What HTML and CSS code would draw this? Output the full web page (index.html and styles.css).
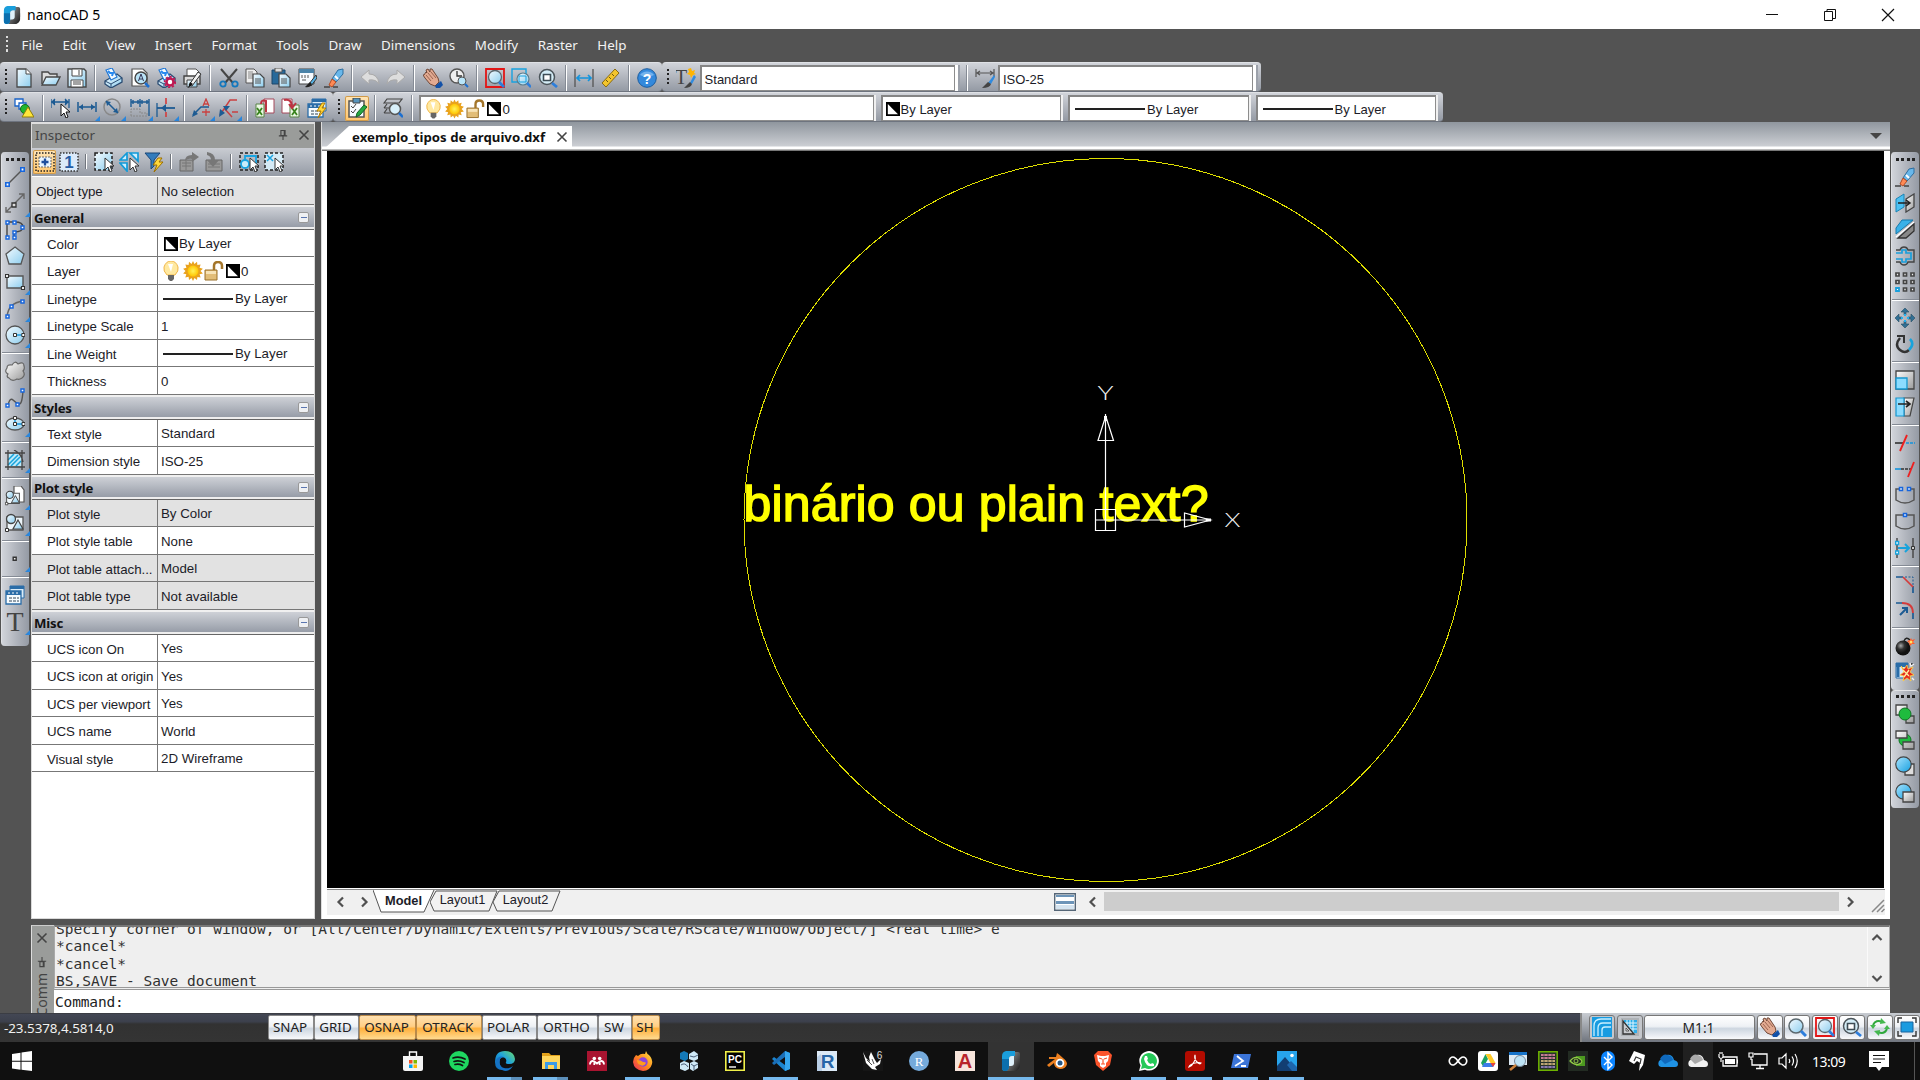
FILE: index.html
```html
<!DOCTYPE html>
<html lang="en">
<head>
<meta charset="utf-8">
<title>nanoCAD 5</title>
<link rel="stylesheet" href="styles.css">
</head>
<body>
<svg class="sprite" aria-hidden="true">
  <defs>
    <linearGradient id="gBlue" x1="0" y1="0" x2="1" y2="1"><stop offset="0" stop-color="#f4fbff"/><stop offset="1" stop-color="#8ccdee"/></linearGradient>
    <linearGradient id="gGrey" x1="0" y1="0" x2="1" y2="1"><stop offset="0" stop-color="#ffffff"/><stop offset="1" stop-color="#9a9a9a"/></linearGradient>
    <linearGradient id="gCyan" x1="0" y1="0" x2="1" y2="1"><stop offset="0" stop-color="#a8e4ff"/><stop offset="1" stop-color="#169fe0"/></linearGradient>
    <linearGradient id="gLogo" x1="0" y1="0" x2="1" y2="1"><stop offset="0" stop-color="#9a9a9a"/><stop offset="1" stop-color="#1a1a1a"/></linearGradient>
    <linearGradient id="gEdge" x1="0" y1="1" x2="1" y2="0"><stop offset="0" stop-color="#0b62b8"/><stop offset=".55" stop-color="#1fa3dd"/><stop offset="1" stop-color="#6bdc6a"/></linearGradient>
    <linearGradient id="gFire" x1="1" y1="0" x2="0" y2="1"><stop offset="0" stop-color="#ffe94a"/><stop offset=".5" stop-color="#ff8a1c"/><stop offset="1" stop-color="#e8265f"/></linearGradient>
    <radialGradient id="gSun"><stop offset="0" stop-color="#fff35a"/><stop offset="1" stop-color="#ffc400"/></radialGradient>
    <radialGradient id="gBomb" cx=".35" cy=".35"><stop offset="0" stop-color="#aaa"/><stop offset=".5" stop-color="#333"/><stop offset="1" stop-color="#111"/></radialGradient>
  </defs>
  <symbol id="logo" viewBox="0 0 20 20"><path d="M8 5h7v3h4v4q0 8-7 8H6v-3l2-1z" fill="url(#gLogo)"/><path d="M13 1h4q2 0 2 2v12q-1 4-5 5H7l1-4h3q2 0 2-3z" fill="url(#gLogo)"/><path d="M5 0h9v5h-3q-3 0-3 3v7q0 5-4 5-3 0-3-3V5q0-4 4-5z" fill="#1a9edb"/><path d="M1 8h7v7q0 5-4 5-3 0-3-3z" fill="#0c6fae"/><path d="M8 8q0-3 3-3h2v7q0 3-3 3H8z" fill="#dff1fa"/></symbol>
  <symbol id="new" viewBox="0 0 20 20"><path d="M3 1h9l5 5v13H3z" fill="url(#gBlue)" stroke="#484848" stroke-width="1.3"/><path d="M12 1v5h5" fill="#fff" stroke="#484848"/></symbol>
  <symbol id="open" viewBox="0 0 20 20"><path d="M1 16V4h6l2 2h7v3" fill="#ddd" stroke="#484848" stroke-width="1.4"/><path d="M1 17 5 9h14l-4 8z" fill="url(#gBlue)" stroke="#484848" stroke-width="1.3"/></symbol>
  <symbol id="save" viewBox="0 0 20 20"><path d="M1 1h16l2 2v16H1z" fill="url(#gBlue)" stroke="#484848" stroke-width="1.4"/><path d="M5 1h10v7H5zM4 12h12v7H4z" fill="#fff" stroke="#484848"/><path d="M12 2v5M6 14h8M6 16h8" stroke="#484848"/></symbol>
  <symbol id="print" viewBox="0 0 20 20"><path d="M2 13 14 6l5 4v4L8 20l-6-4z" fill="url(#gBlue)" stroke="#294b72" stroke-width="1.3"/><path d="m2 13 6 3 11-6M8 16v4" fill="none" stroke="#294b72"/><path d="M3 2 9 0l5 9-6 3z" fill="#f4fbff" stroke="#2378d4" stroke-width="1.2"/><path d="m5 3 2 2 3 0-1 3" fill="none" stroke="#2789f0" stroke-width="2"/></symbol>
  <symbol id="preview" viewBox="0 0 20 20"><path d="M2 1h11l4 4v13H2z" fill="#fff" stroke="#555" stroke-width="1.2"/><circle cx="11" cy="10" r="6" fill="#b9e3f7" stroke="#444" stroke-width="1.4"/><path d="m8.500 13 2.500-7 2.500 7M9.500 11h3.200" fill="none" stroke="#335"/><path d="m15 15 4 4" stroke="#1c6fd0" stroke-width="2.500"/></symbol>
  <symbol id="pgear" viewBox="0 0 20 20"><use href="#print"/><circle cx="14" cy="14" r="3.500" fill="#fff" stroke="#c01852" stroke-width="2.500"/><circle cx="14" cy="14" r="5.300" fill="none" stroke="#c01852" stroke-width="1.800" stroke-dasharray="2 2"/></symbol>
  <symbol id="printer" viewBox="0 0 20 20"><path d="M5 8V1h9l3 3v4" fill="#fff" stroke="#555"/><path d="M2 8h16v8H2z" fill="#ddd" stroke="#444" stroke-width="1.400"/><path d="M5 12h10v7H5z" fill="url(#gBlue)" stroke="#444"/><path d="m7 17 9-13 3 2-9 12z" fill="#f5f5f5" stroke="#333"/><path d="m6 20 5-4-3-2z" fill="#111"/></symbol>
  <symbol id="cut" viewBox="0 0 20 20"><path d="M2 1 14 15M18 1 6 15" stroke="#454545" stroke-width="2"/><circle cx="4" cy="16" r="2.700" fill="none" stroke="#1478bd" stroke-width="1.800"/><circle cx="16" cy="16" r="2.700" fill="none" stroke="#1478bd" stroke-width="1.800"/></symbol>
  <symbol id="copy" viewBox="0 0 20 20"><path d="M1 1h8l3 3v11H1z" fill="#eee" stroke="#555"/><path d="M3 4h5M3 6h5M3 8h5M3 10h5" stroke="#888"/><path d="M8 6h7l4 4v9H8z" fill="url(#gBlue)" stroke="#444" stroke-width="1.200"/><path d="M10 11h6M10 13h6M10 15h6" stroke="#555"/></symbol>
  <symbol id="paste" viewBox="0 0 20 20"><path d="M1 2h13v14H1z" fill="#27699a" stroke="#1d4668"/><path d="M4 0h7v4H4z" fill="#ddd" stroke="#555"/><path d="M8 6h7l4 4v9H8z" fill="url(#gBlue)" stroke="#444" stroke-width="1.200"/><path d="M10 11h6M10 13h6M10 15h6" stroke="#555"/></symbol>
  <symbol id="pspec" viewBox="0 0 20 20"><path d="M2 1h15v15H2z" fill="#f8fbff" stroke="#444"/><path d="M2 1h15v4H2z" fill="#4a83a9"/><path d="M5 7v3M8 7v3M11 7v3M5 12h4" stroke="#555"/><path d="m19 7-7 9 2 2 6-8z" fill="#57b4e8" stroke="#333"/><path d="m13 14-5 5q5 1 7-3z" fill="#222"/></symbol>
  <symbol id="brush" viewBox="0 0 20 20"><path d="m19 1-5 1-6 9 4 3 7-8z" fill="#69b7ea" stroke="#2d6d9f"/><path d="m11 8 3 3" stroke="#fff" stroke-width="2"/><path d="m8 11-3 6 3 2 4-5z" fill="#ff8a55" stroke="#b04a23"/><path d="M0 19h6M9 19h5" stroke="#444" stroke-width="1.600"/></symbol>
  <symbol id="undo" viewBox="0 0 20 20"><path d="m1 9 8-7v4q9 0 10 10-3-5-10-4v4z" fill="#ddd" stroke="#aaa"/></symbol>
  <symbol id="redo" viewBox="0 0 20 20"><path d="m19 9-8-7v4Q2 6 1 16q3-5 10-4v4z" fill="#ddd" stroke="#aaa"/></symbol>
  <symbol id="hand" viewBox="0 0 20 20"><path d="M1 7 3 4l1 1-1-3 2-1 2 3 0-3 2 0 6 9 1 4-4 4-5-2-5-6-2-3z" fill="#e2aa91" stroke="#704838"/><path d="m5 5 5 6M3 7l5 6M8 4l5 6" stroke="#9b6552"/><path d="m12 18 6-5 2 4-3 3h-4z" fill="#1251a8"/></symbol>
  <symbol id="zclock" viewBox="0 0 20 20"><circle cx="8" cy="8" r="7" fill="#eee" stroke="#555" stroke-width="1.400"/><path d="M8 3v5h5" fill="none" stroke="#333" stroke-width="1.300"/><circle cx="13" cy="13" r="4" fill="#b8e5fa" stroke="#555"/><path d="m16 16 3 3" stroke="#1c6fd0" stroke-width="2"/></symbol>
  <symbol id="zoom" viewBox="0 0 20 20"><circle cx="9" cy="9" r="7" fill="url(#gBlue)" stroke="#5b686e" stroke-width="1.500"/><path d="m14 14 5 5" stroke="#2d7edb" stroke-width="3"/></symbol>
  <symbol id="zred" viewBox="0 0 20 20"><path d="M1 1h18v18H1z" fill="none" stroke="#e31616" stroke-width="1.800"/><circle cx="10" cy="9" r="6.500" fill="url(#gBlue)" stroke="#59656c" stroke-width="1.300"/><path d="m14 14 5 5" stroke="#2d7edb" stroke-width="2.600"/></symbol>
  <symbol id="zwin" viewBox="0 0 20 20"><path d="M1 1h14v13H1z" fill="none" stroke="#18a2e0" stroke-width="1.400"/><circle cx="12" cy="11" r="6" fill="url(#gBlue)" stroke="#5b7c8c" stroke-width="1.200"/><path d="M8 8h7v6H8z" fill="none" stroke="#18a2e0"/><path d="m16 15 4 4" stroke="#2d7edb" stroke-width="2.500"/></symbol>
  <symbol id="zpage" viewBox="0 0 20 20"><circle cx="9" cy="9" r="7.500" fill="#d4edf7" stroke="#4b545a" stroke-width="1.500"/><path d="M5.500 6.500h7v6h-7z" fill="#fff" stroke="#3d4c55" stroke-width="1.600"/><path d="m14 15 5 4" stroke="#2d7edb" stroke-width="2.800"/></symbol>
  <symbol id="measure" viewBox="0 0 20 20"><path d="M1 1v18M19 1v18" stroke="#555" stroke-width="1.300"/><path d="M3 10h14M6 7l-3 3 3 3M14 7l3 3-3 3" fill="none" stroke="#1494dc" stroke-width="1.700"/></symbol>
  <symbol id="ruler" viewBox="0 0 20 20"><path d="m2 15 13-14 4 4L6 19z" fill="#f3c52d" stroke="#8a6b12"/><path d="m6 12 2 2M9 9l2 2M12 6l2 2" stroke="#6d5510"/></symbol>
  <symbol id="dstyle" viewBox="0 0 20 20"><path d="M1 1v8M19 1v8M2 5h16M5 3 2 5l3 2M15 3l3 2-3 2" fill="none" stroke="#555" stroke-width="1.200"/><path d="m19 7-6 8 3 1 4-7z" fill="#2f8be0"/><path d="m13 14-6 6q8 0 9-4z" fill="#444"/></symbol>
  <symbol id="layers" viewBox="0 0 20 20"><path d="M1 1h8v7H1z" fill="#fff" stroke="#1762c8" stroke-width="1.300"/><path d="M5 5h7v6H5z" fill="#fff" stroke="#1762c8" stroke-width="1.300"/><circle cx="11" cy="11" r="4.500" fill="#20b52e" stroke="#116f1c"/><path d="m14 9 6 10H8z" fill="#ffe63a" stroke="#8f7d0e"/></symbol>
  <symbol id="dimsel" viewBox="0 0 20 20"><path d="M0 1v9M18 1v9M1 4h16M4 1 1 4l3 3M14 1l3 3-3 3" fill="#1d5b93" stroke="#1d5b93" stroke-width="1.300"/><path d="m10 6v12l3-3 2 5 2-1-2-5h4z" fill="#fff" stroke="#111"/></symbol>
  <symbol id="dimlin" viewBox="0 0 20 20"><path d="M1 4v10M19 4v10M2 9h16" stroke="#1d5b93" stroke-width="1.500"/><path d="m2 9 4-3v6zM18 9l-4-3v6z" fill="#1d5b93"/></symbol>
  <symbol id="dimdia" viewBox="0 0 20 20"><circle cx="9" cy="9" r="8" fill="none" stroke="#888" stroke-width="1.500"/><path d="m3 3 12 12" stroke="#1d5b93" stroke-width="1.500"/><path d="m3 3 5 1-4 4zM15 15l-5-1 4-4z" fill="#1d5b93"/></symbol>
  <symbol id="dimbase" viewBox="0 0 20 20"><path d="M1 1v8M10 1v8M19 1v17M1 4h18M3 2v4M8 2v4M12 2v4M17 2v4" stroke="#1d5b93" stroke-width="1.400"/><path d="M1 18v-7h9v4h7v3z" fill="none" stroke="#888" stroke-dasharray="2 1"/></symbol>
  <symbol id="dimcen" viewBox="0 0 20 20"><path d="M1 5v14" stroke="#1d5b93" stroke-width="1.300"/><path d="M10 0v6M10 14v5" stroke="#d43b3b" stroke-width="1.600"/><path d="M1 10h18" stroke="#1d5b93" stroke-width="1.800"/><path d="m5 10 5-4v8z" fill="#1d5b93"/></symbol>
  <symbol id="leadA" viewBox="0 0 20 20"><path d="m1 17 8-8h8" fill="none" stroke="#1d5b93" stroke-width="1.500"/><path d="m0 19 2-7 4 4z" fill="#1d5b93"/><path d="m11 8 3-7 3 7M12 6h4M14 11v7M10 14h8" stroke="#c94040" stroke-width="1.300" fill="none"/></symbol>
  <symbol id="leadB" viewBox="0 0 20 20"><path d="m1 17 10-15h7M5 10l8 9" fill="none" stroke="#c94040" stroke-width="1.500"/><path d="m0 19 1-8 5 4zM4 8h7l-4 5z" fill="#1d5b93"/><path d="M13 14h6" stroke="#c94040" stroke-width="1.500"/></symbol>
  <symbol id="xls1" viewBox="0 0 20 20"><path d="M9 1h10v14H9z" fill="#fff" stroke="#a5485a"/><path d="M1 6h8v13H1z" fill="#eaf7e3" stroke="#588346"/><path d="m2 10 5 7M7 10l-5 7" stroke="#38831d" stroke-width="1.800"/><path d="M6 6q0-5 5-3v11" fill="none" stroke="#bd3342" stroke-width="2"/></symbol>
  <symbol id="xls2" viewBox="0 0 20 20"><path d="M1 1h10v14H1z" fill="#fff" stroke="#a5485a"/><path d="M9 7h9v12H9z" fill="#eaf7e3" stroke="#588346"/><path d="m11 10 5 7M16 10l-5 7" stroke="#38831d" stroke-width="1.800"/><path d="M3 2q8-2 8 8M8 6l3 4 4-5" fill="none" stroke="#bd3342" stroke-width="2"/></symbol>
  <symbol id="tblz" viewBox="0 0 20 20"><use href="#table"/><path d="m15 5-5 8h4l-3 7 8-10h-4l3-5z" fill="#ffd83b" stroke="#b57d00"/></symbol>
  <symbol id="clip" viewBox="0 0 20 20"><path d="M2 3h15v16H2z" fill="#f6fbff" stroke="#555" stroke-width="1.500"/><path d="M6 0h7v5H6z" fill="#5594bd" stroke="#444"/><path d="m4 8 2 2 3-4M4 13l2 2 3-4" fill="none" stroke="#444"/><path d="m17 7-7 8-1 4 4-2 7-8z" fill="#25a942" stroke="#116322"/></symbol>
  <symbol id="lyrz" viewBox="0 0 20 20"><path d="M1 5 4 1h15l-3 4zM1 10l3-4M1 15l3-4M1 10h5M1 15h6" fill="none" stroke="#444" stroke-width="1.200"/><circle cx="12" cy="11" r="5.500" fill="#d8f0fb" stroke="#555" stroke-width="1.500"/><path d="m16 15 4 4" stroke="#1c6fd0" stroke-width="2.500"/></symbol>
  <symbol id="bulb" viewBox="0 0 20 20"><path d="M6 14Q2 10 3 6q2-6 7-6t7 6q1 4-3 8z" fill="#ffe9a1" stroke="#f0b64a"/><path d="M7 3h5l-2 8z" fill="#fff"/><path d="M7 14h6v4l-2 2H9l-2-2z" fill="#666"/></symbol>
  <symbol id="sun" viewBox="0 0 20 20"><path d="m10 0 1.500 3L14 .8l.4 3.300 3.200-.6-1 3.200 3.300 1L17.500 10l2.400 2.500-3.300.8 1 3.300-3.200-.7L14 19l-2.500-2L10 20l-1.500-3L6 19l-.4-3.200-3.300.7 1-3.200-3.200-.8L2.500 10 .1 7.700l3.300-1-1-3.200 3.200.6L6 .8 8.500 3z" fill="#e9a21d"/><circle cx="10" cy="10" r="5.500" fill="url(#gSun)"/></symbol>
  <symbol id="lock" viewBox="0 0 20 20"><path d="M10 9V5q0-4 4-4t4 4v3" fill="none" stroke="#a4762b" stroke-width="2.500"/><path d="M1 9h12v10H1z" fill="#e2bd77" stroke="#9a712b"/><path d="M2 10h10v3H2z" fill="#f7e3b7"/></symbol>
  <symbol id="sw" viewBox="0 0 14 14"><path d="M.7.7h12.600v12.600H.7z" fill="#000" stroke="#000" stroke-width="1.400"/><path d="M1.800 2v10.200H12z" fill="#fff"/></symbol>
  <symbol id="cursor" viewBox="0 0 20 20"><path d="m11 6v12l3-3 2 5 2-1-2-5h4z" fill="#fff" stroke="#333"/></symbol>
  <symbol id="iadd" viewBox="0 0 20 20"><path d="M1 1h18v18H1z" fill="none" stroke="#222" stroke-width="1.500" stroke-dasharray="1.500 1.500"/><path d="M4 5h12v10H4z" fill="#e9f5ff" stroke="#666" stroke-dasharray="2 1"/><path d="M10 6.500v7M6.500 10h7" stroke="#204f9d" stroke-width="2.300"/></symbol>
  <symbol id="isel" viewBox="0 0 20 20"><path d="M1 1h17v17H1z" fill="url(#gBlue)" stroke="#222" stroke-width="1.500" stroke-dasharray="3 2"/><use href="#cursor"/></symbol>
  <symbol id="itri" viewBox="0 0 20 20"><path d="M1 8 8 1v7zM11 1h8v8zM1 11h7v8z" fill="#cceeff" stroke="#129bd9" stroke-width="1.700"/><use href="#cursor"/></symbol>
  <symbol id="ifilt" viewBox="0 0 20 20"><path d="M1 1h15l-6 7v6l-3 3V8z" fill="#337cbc" stroke="#1a4777"/><path d="m14 6-5 7h4l-3 7 9-10h-4l3-4z" fill="#ffd83b" stroke="#9c6f00"/></symbol>
  <symbol id="iout" viewBox="0 0 20 20"><path d="M1 8h13v11H1z" fill="#999" stroke="#666"/><path d="M3 11h9M3 14h9M7 9v9" stroke="#777"/><path d="M6 9q0-6 7-6V0l7 5-7 5V7q-4-1-7 2z" fill="#777"/></symbol>
  <symbol id="iin" viewBox="0 0 20 20"><path d="M2 8h16v11H2z" fill="#999" stroke="#666"/><path d="M4 12h12M4 15h12" stroke="#777"/><path d="M3 0q8 1 8 8h4l-6 7-6-7h4q0-4-4-5z" fill="#777"/></symbol>
  <symbol id="irect" viewBox="0 0 20 20"><path d="M1 1h18v17H1z" fill="none" stroke="#222" stroke-width="1.500" stroke-dasharray="3 2"/><path d="M6 4h11v9H6z" fill="none" stroke="#19a4e2" stroke-width="1.800"/><circle cx="6" cy="12" r="4" fill="#c8ecfb" stroke="#19a4e2" stroke-width="1.800"/><use href="#cursor"/></symbol>
  <symbol id="ix" viewBox="0 0 20 20"><path d="M1 1h18v17H1z" fill="#d5eaf5" stroke="#222" stroke-width="1.500" stroke-dasharray="3 2"/><path d="m3 3 6 6M9 3 3 9" stroke="#19a4e2" stroke-width="1.500"/><use href="#cursor"/></symbol>
  <symbol id="line" viewBox="0 0 20 20"><path d="M2 18 18 2" stroke="#555" stroke-width="1.400"/><path d="M.8 15.800h3.400v3.400H.8zM15.800.8h3.400v3.400h-3.400z" fill="#fff" stroke="#1766dd" stroke-width="1.600"/></symbol>
  <symbol id="xline" viewBox="0 0 20 20"><path d="M1 19 19 1M1 14v5h5M14 1h5v5" fill="none" stroke="#666" stroke-width="1.400"/><path d="M7 10h4v4H7z" fill="#ddd" stroke="#333" stroke-width="1.300"/></symbol>
  <symbol id="pline" viewBox="0 0 20 20"><path d="M2 18V2h8q8 0 8 5t-9 5v6" fill="none" stroke="#444" stroke-width="1.400"/><path d="M1 1h3v3H1zM8 1h3v3H8zM16 6h3v3h-3zM8 11h3v3H8zM1 16h3v3H1zM8 16h3v3H8z" fill="#fff" stroke="#1766dd" stroke-width="1.400"/></symbol>
  <symbol id="penta" viewBox="0 0 20 20"><path d="m10 1 9 7-3 10H4L1 8z" fill="url(#gBlue)" stroke="#555" stroke-width="1.300"/></symbol>
  <symbol id="rect" viewBox="0 0 20 20"><path d="M2 4h16v12H2z" fill="url(#gBlue)" stroke="#555" stroke-width="1.400"/><path d="M.5 2.500h3v3h-3zM16.500 14.500h3v3h-3z" fill="#fff" stroke="#333" stroke-width="1.200"/></symbol>
  <symbol id="arc" viewBox="0 0 20 20"><path d="M2 18Q3 4 18 2" fill="none" stroke="#666" stroke-width="1.500"/><path d="M1 16h3v3H1zM16 1h3v3h-3zM5 6h3v3H5z" fill="#fff" stroke="#1766dd" stroke-width="1.500"/></symbol>
  <symbol id="circ" viewBox="0 0 20 20"><circle cx="10" cy="10" r="9" fill="url(#gBlue)" stroke="#555" stroke-width="1.300"/><path d="M10 10h8" stroke="#1494dc" stroke-width="1.400"/><path d="M8.500 8.500h3v3h-3zM16.800 8.500h3v3h-3z" fill="#fff" stroke="#333"/></symbol>
  <symbol id="cloud" viewBox="0 0 20 20"><path d="M3 13q-4-2-1-6 0-4 5-3 3-5 6-1 6-3 6 2 1 3-1 5 3 4-1 7-3 2-5 1-5 3-8-1-3-1-1-4z" fill="url(#gGrey)" stroke="#666" stroke-width="1.200"/></symbol>
  <symbol id="spline" viewBox="0 0 20 20"><path d="M3 17q2-8 5-5t6 4 4-13" fill="none" stroke="#555" stroke-width="1.400"/><path d="M1 16h3v3H1zM11 15h3v3h-3zM16 1h3v3h-3z" fill="#fff" stroke="#1766dd" stroke-width="1.400"/></symbol>
  <symbol id="ell" viewBox="0 0 20 20"><ellipse cx="10" cy="10" rx="9" ry="6" fill="url(#gBlue)" stroke="#555" stroke-width="1.300"/><path d="M10 4v6h8" fill="none" stroke="#1494dc" stroke-width="1.400"/><path d="M8.500 2.500h3v3h-3zM8.500 8.500h3v3h-3zM17 8.500h3v3h-3z" fill="#fff" stroke="#333"/></symbol>
  <symbol id="hatch" viewBox="0 0 20 20"><path d="M3 4h10q4 3 4 12H3z" fill="#bdeafa"/><path d="m3 10 6-6M3 15 13 5M6 16l9-9M11 16l5-5" stroke="#18a3dc" stroke-width="1.500"/><path d="M3 0v20M0 3h20M17 0v20M0 17h20M9 0q8 4 9 12" fill="none" stroke="#444" stroke-width="1.300"/></symbol>
  <symbol id="blk1" viewBox="0 0 20 20"><path d="M9 0h7l3 4v12H9z" fill="#fff" stroke="#555" stroke-width="1.200"/><use href="#blk2" width="20" height="20" transform="translate(0 4) scale(.8)"/></symbol>
  <symbol id="blk2" viewBox="0 0 20 20"><path d="M2 17V4h16v13z" fill="#eef6fa" stroke="#555" stroke-width="1.300"/><circle cx="6" cy="6" r="4.500" fill="url(#gBlue)" stroke="#444" stroke-width="1.300"/><path d="m13 7 5 9H8z" fill="url(#gBlue)" stroke="#444" stroke-width="1.200"/><path d="M.5 15.500h3v3h-3z" fill="#fff" stroke="#333"/></symbol>
  <symbol id="point" viewBox="0 0 20 20"><path d="M8.200 8.200h3v3h-3z" fill="#eee" stroke="#333" stroke-width="1.400"/></symbol>
  <symbol id="table" viewBox="0 0 20 20"><path d="M5 1h14v12H5z" fill="#d9ebf8" stroke="#2b6da8"/><path d="M5 1h14v3H5z" fill="#2b6da8"/><path d="M1 6h15v13H1z" fill="#f5fbff" stroke="#2b6da8" stroke-width="1.300"/><path d="M1 6h15v4H1z" fill="#2b6da8"/><path d="M3 8h2M7 8h2M11 8h2" stroke="#fff"/><path d="M4 13h3M8 13h3M12 13h2M4 16h3M8 16h3M12 16h2" stroke="#345"/></symbol>
  <symbol id="mirror" viewBox="0 0 20 20"><path d="m1 6 8-5v13l-8 5z" fill="#4cc0f2" stroke="#1a84b5"/><path d="m11 6 8-5v13l-8 5z" fill="url(#gGrey)" stroke="#444" stroke-width="1.300"/><path d="M3 10h11M11 7l4 3-4 3" fill="none" stroke="#222" stroke-width="1.500"/></symbol>
  <symbol id="diag" viewBox="0 0 20 20"><path d="M7 1h11L1 15V9z" fill="#39b1e9" stroke="#1679aa"/><path d="M1 18 19 3" stroke="#fff" stroke-width="1.500"/><path d="M19 5v7l-8 7H3z" fill="#888" stroke="#333" stroke-width="1.300"/></symbol>
  <symbol id="offset" viewBox="0 0 20 20"><path d="M1 4h4q1-3 4-3t4 3h6v12h-6q-1 3-4 3t-4-3H1" fill="none" stroke="#444" stroke-width="1.400"/><path d="M1 7h6V4h4v3h5v6h-5v3H7v-3H1" fill="none" stroke="#189fdc" stroke-width="1.700"/></symbol>
  <symbol id="array" viewBox="0 0 20 20"><path d="M1 1h3v3H1zM8.500 1h3v3h-3zM16 1h3v3h-3zM1 8.500h3v3H1zM8.500 8.500h3v3h-3zM16 8.500h3v3h-3zM8.500 16h3v3h-3zM16 16h3v3h-3z" fill="#eee" stroke="#444" stroke-width="1.700"/><path d="M1 16h3v3H1z" fill="#fff" stroke="#189fdc" stroke-width="1.800"/></symbol>
  <symbol id="move" viewBox="0 0 20 20"><path d="m10 0 4 4h-3v3H9V4H6zM10 20l4-4h-3v-3H9v3H6zM0 10l4-4v3h3v2H4v3zM20 10l-4-4v3h-3v2h3v3z" fill="#316f94" stroke="#294d62" stroke-width=".6"/><path d="M9 6h2v2H9zM9 12h2v2H9zM6 9h2v2H6zM12 9h2v2h-2z" fill="#26b2f0"/></symbol>
  <symbol id="rotate" viewBox="0 0 20 20"><path d="M5 4q-6 7 0 12 5 4 9 0" fill="none" stroke="#333" stroke-width="2.500"/><path d="M14 16q6-6 1-11" fill="none" stroke="#18a3dc" stroke-width="2.500"/><path d="M2 2h7v7" fill="none" stroke="#333" stroke-width="2"/></symbol>
  <symbol id="scale" viewBox="0 0 20 20"><path d="M1 1h18v18H1z" fill="url(#gGrey)" stroke="#444" stroke-width="1.300"/><path d="M1 8h11v11H1z" fill="#8cdcff" stroke="#1697cf" stroke-width="1.300"/></symbol>
  <symbol id="stretch" viewBox="0 0 20 20"><path d="M9 1h10l-4 18H9z" fill="url(#gGrey)" stroke="#444" stroke-width="1.200"/><path d="M1 1h8v18H1z" fill="#8cdcff" stroke="#1697cf" stroke-width="1.200"/><path d="M3 7h11M11 4l4 3-4 3" fill="none" stroke="#222" stroke-width="1.600"/></symbol>
  <symbol id="trim" viewBox="0 0 20 20"><path d="M0 10h8" stroke="#333" stroke-width="1.600"/><path d="M11 10h9" stroke="#1494dc" stroke-width="1.600" stroke-dasharray="3 1"/><path d="M5 18 12 2" stroke="#ed2020" stroke-width="1.900"/></symbol>
  <symbol id="extend" viewBox="0 0 20 20"><path d="M0 10h6" stroke="#1494dc" stroke-width="1.600"/><path d="M6 10h10" stroke="#333" stroke-width="1.600" stroke-dasharray="3 1"/><path d="m13 18 6-15" stroke="#ed2020" stroke-width="1.900"/></symbol>
  <symbol id="brk2" viewBox="0 0 20 20"><path d="M5 4H1v11q9 6 18 0V4h-4" fill="none" stroke="#555" stroke-width="1.500"/><path d="M4.500 2.500h3v3h-3zM12.500 2.500h3v3h-3z" fill="#fff" stroke="#1766dd" stroke-width="1.500"/></symbol>
  <symbol id="brk1" viewBox="0 0 20 20"><path d="M8 4H1v11q9 6 18 0V4h-7" fill="none" stroke="#555" stroke-width="1.500"/><path d="M8.500 2.500h3v3h-3z" fill="#fff" stroke="#1766dd" stroke-width="1.500"/></symbol>
  <symbol id="align" viewBox="0 0 20 20"><path d="M2 0v20M18 0v20" stroke="#444" stroke-width="1.400"/><path d="M3 10h10M10 6l4 4-4 4" fill="none" stroke="#18a3dc" stroke-width="2"/><path d="M.6 3.500h3v3h-3zM.6 13h3v3h-3z" fill="#fff" stroke="#18a3dc" stroke-width="1.400"/><path d="M16.500 8.500h3v3h-3z" fill="#ccc" stroke="#333"/></symbol>
  <symbol id="chamf" viewBox="0 0 20 20"><path d="M1 3h7M18 12v7" stroke="#1d5b93" stroke-width="1.700"/><path d="m8 3 10 10" stroke="#d43b3b" stroke-width="1.700"/><path d="M10 3h8v8" fill="none" stroke="#1d5b93" stroke-dasharray="2 1.500"/></symbol>
  <symbol id="fillet" viewBox="0 0 20 20"><path d="M1 3h6M18 13v6" stroke="#1d5b93" stroke-width="1.700"/><path d="M7 3q11 0 11 10" fill="none" stroke="#d43b3b" stroke-width="1.800"/><path d="m5 15 6-6M7 8h5v5" fill="none" stroke="#1d5b93" stroke-width="2"/></symbol>
  <symbol id="bomb" viewBox="0 0 20 20"><circle cx="8" cy="12" r="7.500" fill="url(#gBomb)"/><path d="M9 5q2-5 6-1" fill="none" stroke="#222" stroke-width="1.500"/><path d="m16 2 1 2 3-1-2 3 2 2h-3l-2 2-1-3-2-2 3-1z" fill="#ff5a2a"/><circle cx="16" cy="6" r="1.500" fill="#ffe66a"/></symbol>
  <symbol id="boomtbl" viewBox="0 0 20 20"><path d="M1 1h12v15H1z" fill="#d7e9f7" stroke="#2b6da8"/><path d="M1 1h12v4H1z" fill="#2b6da8"/><path d="M3 1v14" stroke="#2b6da8" stroke-width="3"/><path d="m6 4 3 3 3-4 1 4 5-2-3 5 4 3-4 1 1 5-4-3-4 3 1-5-4-1 4-3z" fill="#e42b20" stroke="#ffd74a" stroke-width=".8"/><path d="m8 8 6 6M14 8l-5 7" stroke="#fff0a0" stroke-width="1.300"/><path d="M15 1l1 3 3-2M17 16l2 2" stroke="#f4f4f4" stroke-width="1.400"/></symbol>
  <symbol id="ord1" viewBox="0 0 20 20"><path d="M1 1h11v10H1zM11 12h8v7h-8z" fill="url(#gGrey)" stroke="#444" stroke-width="1.300"/><circle cx="10" cy="10" r="6" fill="#1fbb3e" stroke="#107524"/></symbol>
  <symbol id="ord2" viewBox="0 0 20 20"><circle cx="10" cy="10" r="6" fill="#1fbb3e" stroke="#107524"/><path d="M1 1h11v7H1zM8 12h11v7H8z" fill="url(#gGrey)" stroke="#444" stroke-width="1.300"/></symbol>
  <symbol id="ord3" viewBox="0 0 20 20"><path d="M10 8h9v11h-9z" fill="#ddd" stroke="#444" stroke-width="1.300"/><circle cx="8.500" cy="8.500" r="7.700" fill="url(#gCyan)" stroke="#444" stroke-width="1.200"/></symbol>
  <symbol id="ord4" viewBox="0 0 20 20"><circle cx="8.500" cy="8.500" r="7.700" fill="url(#gCyan)" stroke="#444" stroke-width="1.200"/><path d="M8 9h11v10H8z" fill="url(#gGrey)" stroke="#444" stroke-width="1.300"/></symbol>
  <symbol id="pin" viewBox="0 0 12 14"><path d="M3.500 1.500h5v6h-5zM1 8h10M6 8v5M7.500 1v6" fill="none" stroke="#444" stroke-width="1.300"/></symbol>
  <symbol id="x" viewBox="0 0 12 12"><path d="m1.500 1.500 9 9M10.500 1.500l-9 9" stroke="#444" stroke-width="1.600"/></symbol>
  <symbol id="chev" viewBox="0 0 12 12"><path d="M8 1.500 3.500 6 8 10.500" fill="none" stroke="#505050" stroke-width="2.200"/></symbol>
  <symbol id="pipes" viewBox="0 0 20 20"><path d="M0 0h20v20H0z" fill="#189be0"/><path d="M2 19V9q0-7 7-7h10M6 19v-8q0-5 5-5h8M10 19v-6q0-3 3-3h6" fill="none" stroke="#c8f0ff" stroke-width="1.300"/></symbol>
  <symbol id="gridtri" viewBox="0 0 20 20"><path d="M1 1h18v18H1z" fill="#aeb2b6"/><path d="M4 3h13v13H4z" fill="#2cace8"/><path d="M7 3v13M10 3v13M13 3v13M4 6h13M4 9h13M4 12h13" stroke="#dff5ff"/><path d="M3 4v13h11z" fill="#c9ccd0" stroke="#333" stroke-width="1.300"/><path d="M6 11v3h3z" fill="#eee" stroke="#333" stroke-width=".7"/></symbol>
  <symbol id="regen" viewBox="0 0 20 20"><path d="M3 8q3-6 9-3M17 12q-3 6-9 3" fill="none" stroke="#2fa83c" stroke-width="2"/><path d="m11 1 5 5-6 1zM9 19l-5-5 6-1zM0 8h6l-3 4zM20 12h-6l3-4z" fill="#45b84f"/></symbol>
  <symbol id="full" viewBox="0 0 20 20"><path d="M4 5h12v10H4z" fill="#1a9be0" stroke="#1665a0"/><path d="M1 6V1h4M15 1h4v5M19 14v5h-4M5 19H1v-5" fill="none" stroke="#333" stroke-width="1.400"/></symbol>
  <symbol id="win" viewBox="0 0 20 20"><path d="m0 3 8.500-1.300v8H0zM9.500 1.500 20 0v9.700H9.500zM0 10.700h8.500v8.100L0 17.500zM9.500 10.700H20V20L9.500 18.700z" fill="#fff"/></symbol>
  <symbol id="store" viewBox="0 0 20 20"><path d="M6.500 6V1h7v5" fill="none" stroke="#fff" stroke-width="1.400"/><path d="M0 5h20v13q0 2-2 2H2q-2 0-2-2z" fill="#f4f4f4"/><path d="M6 9h3.500v3.500H6z" fill="#f25022"/><path d="M10.500 9H14v3.500h-3.500z" fill="#7fba00"/><path d="M6 13.500h3.500V17H6z" fill="#00a4ef"/><path d="M10.500 13.500H14V17h-3.500z" fill="#ffb900"/></symbol>
  <symbol id="spot" viewBox="0 0 20 20"><circle cx="10" cy="10" r="10" fill="#1ed760"/><path d="M4 7q6-2 12 1M5 10.500q5-1.500 10 1M6 13.500q4-1 7.500 1" fill="none" stroke="#111" stroke-width="1.700" stroke-linecap="round"/></symbol>
  <symbol id="edge" viewBox="0 0 20 20"><path d="M0 11Q0 0 10 0q9 0 10 8 0 5-6 5-4 0-3-2 1-2-1-4-3-2-5 1-2 7 4 11Q0 20 0 11z" fill="url(#gEdge)"/><path d="M5 8q-2 7 4 9 5 1 9-2-4 7-11 4Q0 16 1 9q3-5 8-3-3 0-4 2z" fill="#1672c5"/></symbol>
  <symbol id="folder" viewBox="0 0 20 20"><path d="M1 2h7l2 2h9v14H1z" fill="#e3a21a"/><path d="M1 5h18v13H1z" fill="#ffd65c"/><path d="M4 18v-7h12v7h-3v-4H7v4z" fill="#3b9be8"/></symbol>
  <symbol id="mend" viewBox="0 0 20 20"><path d="M0 0h20v20H0z" fill="#a91430"/><circle cx="7.300" cy="7.500" r="1.800" fill="#fff"/><circle cx="12.700" cy="7.500" r="1.800" fill="#fff"/><path d="M3 13.500q0-3 2.500-3.500l2 .5L10 12.500l2.500-2 2-.5q2.500.5 2.500 3.500M7.300 11v3M12.700 11v3" fill="none" stroke="#fff" stroke-width="1.800"/></symbol>
  <symbol id="fox" viewBox="0 0 20 20"><path d="M3 4l2 1q3-3 7-2l1-3q1 3 3 4 4 4 3 9-2 7-9 7-9-1-10-9 0-4 3-7z" fill="url(#gFire)"/><circle cx="10" cy="11" r="4.700" fill="#8b45dc"/><path d="M4 9q4 0 6 2 3 0 3 1-2 4-6 2-3-1-3-5z" fill="#ff9b1c"/></symbol>
  <symbol id="hex" viewBox="0 0 20 20"><path d="m5 0 4 2v6L6 10 1 8V2z" fill="#1479b8"/><path d="m15 0 4 3v5l-4 2-5-2V3zM5 10l5 2v6l-4 2-5-2v-6zM15 10l4 2v5l-5 3-3-2v-6z" fill="#cfe9f7"/><path d="m11 5 4 1 4-2M2 14q4-3 7 2M12 13l3 2 4-2M15 15v4" stroke="#124" fill="none" stroke-width=".7"/></symbol>
  <symbol id="vsc" viewBox="0 0 20 20"><path d="m14 0 5 2v16l-5 2L1 8l2-2 11 8z" fill="#1b84cf"/><path d="M1 12 14 0v6L3 14z" fill="#1a6fb8"/><path d="m14 0 5 2v16l-5 2z" fill="#35a6ee"/></symbol>
  <symbol id="blend" viewBox="0 0 20 20"><path d="M10 2q3 2 6 5 4 3 4 6-1 5-7 5-6-1-6-6l-5 4-2-2 8-6H2V6h7z" fill="#ec8020"/><circle cx="13" cy="12" r="4.300" fill="#fff"/><circle cx="13" cy="12" r="2.500" fill="#265787"/></symbol>
  <symbol id="brave" viewBox="0 0 20 20"><path d="M5 0h10l4 4-2 10-7 6-7-6L1 4z" fill="#fb542b"/><path d="m4 4 4 1h4l4-1-1 6-2 2 0 3-3 2-3-2 0-3-2-2z" fill="#fff"/><path d="m6 7 3 1M14 7l-3 1M10 8v5M8 13h4" stroke="#fb542b" stroke-width="1.200"/></symbol>
  <symbol id="wapp" viewBox="0 0 20 20"><path d="m0 20 1.500-5.500A9.800 9.800 0 1 1 6 18.700z" fill="#fff"/><path d="m2 18 1-4a8 8 0 1 1 3 3z" fill="#25c958"/><path d="M6 5h2l1 3-1 1q1 3 4 4l1-1 2 1v2q-8 2-10-7z" fill="#fff"/></symbol>
  <symbol id="acro" viewBox="0 0 20 20"><rect width="20" height="20" rx="3" fill="#b30b00"/><path d="M10 4q1 4-1 7-2 4-5 5 1-3 6-4 4-1 6 0-1 2-4-1-3-3-2-7z" fill="none" stroke="#fff" stroke-width="1.200"/></symbol>
  <symbol id="pws" viewBox="0 0 20 20"><path d="M3 3h17l-3 14H0z" fill="#3b74d8"/><path d="m6 5 6 5-8 5M10 15h5" fill="none" stroke="#fff" stroke-width="1.800"/></symbol>
  <symbol id="photo" viewBox="0 0 20 20"><path d="M0 0h20v20H0z" fill="#27a4ec"/><path d="M0 15 8 6l12 14H0z" fill="#123e72"/><path d="M10 14l4-4 6 6v4h-5z" fill="#1e65ac"/><circle cx="15" cy="4.500" r="1.800" fill="#fff"/></symbol>
  <symbol id="inf" viewBox="0 0 20 20"><path d="M10 10Q6 4 2.500 7q-2.500 3 0 6 3.500 3 7.500-3t7.500-3q2.500 3 0 6-3.500 3-7.500-3z" fill="none" stroke="#fff" stroke-width="1.600"/></symbol>
  <symbol id="drive" viewBox="0 0 20 20"><rect width="20" height="20" rx="3" fill="#fff"/><path d="M7.500 3 10 8l-4.500 8L3 12z" fill="#1ba261"/><path d="M7.500 3h5l5 9h-5z" fill="#ffc928"/><path d="M6 12h11.500L15 16H4z" fill="#3d7bea"/><path d="m15 16 2.500-4h-5z" fill="#e94235"/></symbol>
  <symbol id="mag" viewBox="0 0 20 20"><path d="M1 1h18v13H1z" fill="#dce9f3"/><path d="M1 1h18v3H1z" fill="#1673c9"/><circle cx="12" cy="10" r="5.500" fill="#bde3f6" stroke="#789"/><path d="m8 14-6 5" stroke="#cb813b" stroke-width="2.500"/></symbol>
  <symbol id="chip" viewBox="0 0 20 20"><path d="M.8.800h18.400v18.400H.8z" fill="#26312a" stroke="#6eb300" stroke-width="1.500"/><path d="M3 4h14M3 7h14" stroke="#c67c92" stroke-width="2"/><path d="M3 10h14M3 13h14" stroke="#bfa672" stroke-width="2"/><path d="M3 16h14" stroke="#8b7ab0" stroke-width="2"/><path d="M6 2v16M10 2v16M14 2v16" stroke="#353b35" stroke-width=".7"/></symbol>
  <symbol id="nv" viewBox="0 0 20 20"><path d="M0 0h20v20H0z" fill="#222b22"/><path d="M8 5h9v10H8z" fill="#4c9a20"/><path d="M2 10q5-6 10-2 3 2 1 4-5 4-11-2z" fill="#222b22" stroke="#91cb46" stroke-width="1.200"/><circle cx="8" cy="10" r="2" fill="none" stroke="#91cb46"/></symbol>
  <symbol id="bt" viewBox="0 0 20 20"><rect x="3" width="14" height="20" rx="7" fill="#0a84ff"/><path d="m6 6 8 8-4 4V2l4 4-8 8" fill="none" stroke="#fff" stroke-width="1.400"/></symbol>
  <symbol id="rot" viewBox="0 0 20 20"><path d="m6 0 11 4-2 10-4 6 1-8-3-2-3 3-5-3z" fill="#fff"/><path d="m6 10 2-4 5 2-1 5" fill="none" stroke="#333" stroke-width="1.200"/></symbol>
  <symbol id="cblue" viewBox="0 0 20 20"><path d="M3 16q-4-1-2-6 2-2 4-2 2-5 7-4 3 1 4 5 4 1 4 4 0 3-3 3z" fill="#1f92e4"/><path d="M2 8q3-6 8-4 4 1 5 5l-8 4z" fill="#0f69bd"/></symbol>
  <symbol id="cgrey" viewBox="0 0 20 20"><path d="M3 16q-4-1-2-6 2-2 4-2 2-5 7-4 3 1 4 5 4 1 4 4 0 3-3 3z" fill="#f2f2f2"/><path d="M2 8q3-6 8-4 4 1 5 5l-8 4z" fill="#aaa"/></symbol>
  <symbol id="batt" viewBox="0 0 20 20"><path d="M5 6h14v9H5V9" fill="none" stroke="#fff" stroke-width="1.300"/><path d="M7 8h10v5H7zM19 8.500h1.500v4H19z" fill="#fff"/><path d="M1 3v3q2 3 4 0V3M2 3V1M4 3V1M3 7v4" fill="none" stroke="#fff" stroke-width="1.200"/></symbol>
  <symbol id="net" viewBox="0 0 20 20"><path d="M6 3h13v11H4V8M12 14v4M8 17.500h8" fill="none" stroke="#fff" stroke-width="1.300"/><path d="M1 2h4v4H1zM3 6v3" fill="none" stroke="#fff" stroke-width="1.200"/></symbol>
  <symbol id="vol" viewBox="0 0 20 20"><path d="M1 7h3l4-4v14l-4-4H1zM11 8q1.500 2 0 4M14 5.500q3 4.500 0 9M17 3q4.500 7 0 14" fill="none" stroke="#fff" stroke-width="1.200"/></symbol>
  <symbol id="note" viewBox="0 0 20 20"><path d="M0 0h20v16h-7l-3 4-3-4H0z" fill="#fff"/><path d="M4 4.500h12M4 8h12M4 11.500h8" stroke="#111" stroke-width="1.200"/></symbol>
</svg>

<div class="window">
  <header class="titlebar">
    <svg class="app-logo"><use href="#logo"/></svg><span class="app-name">nanoCAD 5</span>
    <svg class="win-ctl" viewBox="0 0 14 14"><path d="M1 6.500h12" stroke="#111"/></svg>
    <svg class="win-ctl" viewBox="0 0 14 14"><path d="M1.500 3.500h8v9h-8zM4 3.500v-2h8.500v9H10" fill="none" stroke="#111"/></svg>
    <svg class="win-ctl" viewBox="0 0 14 14"><path d="m1 1 12 12M13 1 1 13" stroke="#111" stroke-width="1.200"/></svg>
  </header>
  <nav class="menubar"><i class="grip light"></i><span>File</span><span>Edit</span><span>View</span><span>Insert</span><span>Format</span><span>Tools</span><span>Draw</span><span>Dimensions</span><span>Modify</span><span>Raster</span><span>Help</span></nav>

  <div class="bar-row">
    <div class="hbar bar-main"><i class="grip"></i>
      <b><svg><use href="#new"/></svg></b><b><svg><use href="#open"/></svg></b><b><svg><use href="#save"/></svg></b><hr>
      <b><svg><use href="#print"/></svg></b><b><svg><use href="#preview"/></svg></b><b><svg><use href="#pgear"/></svg></b><b><svg><use href="#printer"/></svg></b><hr>
      <b><svg><use href="#cut"/></svg></b><b><svg><use href="#copy"/></svg></b><b><svg><use href="#paste"/></svg></b><b><svg><use href="#pspec"/></svg></b><b><svg><use href="#brush"/></svg></b><hr>
      <b><svg><use href="#undo"/></svg></b><b><svg><use href="#redo"/></svg></b><hr>
      <b><svg><use href="#hand"/></svg></b><b><svg><use href="#zclock"/></svg></b><hr>
      <b><svg><use href="#zred"/></svg></b><b><svg><use href="#zwin"/></svg></b><b><svg><use href="#zpage"/></svg></b><hr>
      <b><svg><use href="#measure"/></svg></b><b><svg><use href="#ruler"/></svg></b><hr>
      <b><svg viewBox="0 0 20 20"><circle cx="10" cy="10" r="9.300" fill="#3489dc" stroke="#1c5d9f"/><path d="M3 7a8 7 0 0 1 14 0q-7 4-14 0z" fill="#8fc3f2" opacity=".7"/><text x="10" y="15.500" class="ic-help">?</text></svg></b>
    </div>
    <div class="hbar bar-styles"><i class="grip"></i>
      <b><svg viewBox="0 0 20 20"><text x="-1" y="16" class="ic-t">T</text><path d="m18 7-4 8 2 1 4-7z" fill="#2f8be0"/><path d="m14 14-6 6q7 0 8-4z" fill="#444"/><path d="m15 0 1 3 3-1-1 3 2 1-3 1-2 3-1-3-3-1 2-2-1-3z" fill="#ffb400"/></svg></b><div class="field f-text">Standard</div><hr>
      <b><svg><use href="#dstyle"/></svg></b><div class="field f-text">ISO-25</div>
    </div>
  </div>
  <div class="bar-row">
    <div class="hbar bar-dims"><i class="grip"></i>
      <b><svg><use href="#layers"/></svg></b><hr>
      <b><svg><use href="#dimsel"/></svg></b><b class="more"><svg><use href="#dimlin"/></svg></b><b class="more"><svg><use href="#dimdia"/></svg></b><b class="more"><svg><use href="#dimbase"/></svg></b><b class="more"><svg><use href="#dimcen"/></svg></b><hr>
      <b class="more"><svg><use href="#leadA"/></svg></b><b class="more"><svg><use href="#leadB"/></svg></b><hr>
      <b><svg><use href="#xls1"/></svg></b><b><svg><use href="#xls2"/></svg></b><b><svg><use href="#tblz"/></svg></b>
    </div>
    <div class="hbar bar-props"><i class="grip"></i>
      <b class="on"><svg><use href="#clip"/></svg></b><hr><b><svg><use href="#lyrz"/></svg></b><hr>
      <div class="field f-layer"><svg><use href="#bulb"/></svg><svg><use href="#sun"/></svg><svg><use href="#lock"/></svg><svg class="swatch"><use href="#sw"/></svg>0</div>
      <div class="field f-prop"><svg class="swatch"><use href="#sw"/></svg>By Layer</div>
      <div class="field f-prop"><i class="ltype"></i>By Layer</div>
      <div class="field f-prop"><i class="ltype"></i>By Layer</div>
    </div>
  </div>

  <main class="workspace">
    <div class="vbar left-tools"><i class="grip"></i>
      <b><svg><use href="#line"/></svg></b><b class="more"><svg><use href="#xline"/></svg></b><b><svg><use href="#pline"/></svg></b><b><svg><use href="#penta"/></svg></b><b class="more"><svg><use href="#rect"/></svg></b><b class="more"><svg><use href="#arc"/></svg></b><b class="more"><svg><use href="#circ"/></svg></b><hr>
      <b><svg><use href="#cloud"/></svg></b><b><svg><use href="#spline"/></svg></b><b class="more"><svg><use href="#ell"/></svg></b><hr>
      <b class="more"><svg><use href="#hatch"/></svg></b><hr>
      <b class="more"><svg><use href="#blk1"/></svg></b><b class="more"><svg><use href="#blk2"/></svg></b><hr>
      <b class="more"><svg><use href="#point"/></svg></b><hr>
      <b><svg><use href="#table"/></svg></b><b class="more"><svg viewBox="0 0 20 20"><text x="10" y="19" class="ic-bigt">T</text></svg></b>
    </div>

    <section class="inspector">
      <div class="insp-head"><span>Inspector</span><svg class="pin"><use href="#pin"/></svg><svg class="cls"><use href="#x"/></svg></div>
      <div class="insp-tools"><b class="on"><svg><use href="#iadd"/></svg></b><b><svg viewBox="0 0 20 20"><path d="M1 1h18v18H1z" fill="#dbeafa" stroke="#333" stroke-width="1.500" stroke-dasharray="1.500 1.500"/><text x="10" y="16" class="ic-one">1</text></svg></b><hr><b><svg><use href="#isel"/></svg></b><b><svg><use href="#itri"/></svg></b><b><svg><use href="#ifilt"/></svg></b><hr><b><svg><use href="#iout"/></svg></b><b><svg><use href="#iin"/></svg></b><hr><b><svg><use href="#irect"/></svg></b><b><svg><use href="#ix"/></svg></b></div>
      <div class="props">
        <div class="row ro top"><span>Object type</span><span>No selection</span></div>
        <div class="group">General<i></i></div>
        <div class="row"><span>Color</span><span class="pad"><svg class="swatch"><use href="#sw"/></svg>By Layer</span></div>
        <div class="row"><span>Layer</span><span class="icons"><svg><use href="#bulb"/></svg><svg><use href="#sun"/></svg><svg><use href="#lock"/></svg><svg class="swatch"><use href="#sw"/></svg>0</span></div>
        <div class="row"><span>Linetype</span><span><i class="ltype"></i>By Layer</span></div>
        <div class="row"><span>Linetype Scale</span><span>1</span></div>
        <div class="row"><span>Line Weight</span><span><i class="ltype"></i>By Layer</span></div>
        <div class="row"><span>Thickness</span><span>0</span></div>
        <div class="group">Styles<i></i></div>
        <div class="row"><span>Text style</span><span>Standard</span></div>
        <div class="row"><span>Dimension style</span><span>ISO-25</span></div>
        <div class="group">Plot style<i></i></div>
        <div class="row ro"><span>Plot style</span><span>By Color</span></div>
        <div class="row"><span>Plot style table</span><span>None</span></div>
        <div class="row ro"><span>Plot table attach...</span><span>Model</span></div>
        <div class="row ro"><span>Plot table type</span><span>Not available</span></div>
        <div class="group">Misc<i></i></div>
        <div class="row"><span>UCS icon On</span><span>Yes</span></div>
        <div class="row"><span>UCS icon at origin</span><span>Yes</span></div>
        <div class="row"><span>UCS per viewport</span><span>Yes</span></div>
        <div class="row"><span>UCS name</span><span>World</span></div>
        <div class="row"><span>Visual style</span><span>2D Wireframe</span></div>
      </div>
    </section>

    <section class="document">
      <div class="tabstrip"><div class="doc-tab"><span>exemplo_tipos de arquivo.dxf</span><svg><use href="#x"/></svg></div><i class="drop"></i></div>
      <svg class="canvas" viewBox="327 151 1557 737">
        <circle cx="1105.500" cy="520" r="361.500" fill="none" stroke="#dede00" stroke-width="1" shape-rendering="crispEdges"/>
        <text class="cad-text" x="743.500" y="520.500" textLength="465">binário ou plain text?</text>
        <g fill="none" stroke="#fff" stroke-width="1.200"><path d="M1095.500 509.500h20v21h-20zM1105.500 530V414M1095 520h115M1098 440.500h15.500L1105.700 416zM1184.500 513v14l26-7z"/><path d="M1105.500 416v5M1206 520h5" stroke-width="3"/></g>
        <text class="axis" x="1097.500" y="399.700" textLength="16" lengthAdjust="spacingAndGlyphs">Y</text><text class="axis" x="1224.500" y="527.300" textLength="16" lengthAdjust="spacingAndGlyphs">X</text>
      </svg>
      <div class="layoutbar">
        <svg class="nav"><use href="#chev"/></svg><svg class="nav flip"><use href="#chev"/></svg>
        <div class="ltab cur"><svg viewBox="0 0 62 23" preserveAspectRatio="none"><path d="m0 0 8 22h43L61 0" fill="#fff" stroke="#555"/></svg><span>Model</span></div>
        <div class="ltab"><svg viewBox="0 0 68 23" preserveAspectRatio="none"><path d="M6 1 0 12l4 9h55L67 1z" fill="#f2f2f2" stroke="#555"/></svg><span>Layout1</span></div>
        <div class="ltab"><svg viewBox="0 0 68 23" preserveAspectRatio="none"><path d="M6 1 0 12l4 9h55L67 1z" fill="#f2f2f2" stroke="#555"/></svg><span>Layout2</span></div>
        <svg class="split" viewBox="0 0 22 18"><path d="M.7.700h20.600v16.600H.7z" fill="#fff" stroke="#567" stroke-width="1.400"/><path d="M2 2h18v2H2zM2 8h18v3H2z" fill="#6c94b8"/><path d="M2 12h18v4H2z" fill="#d5e4f0"/></svg>
        <svg class="nav sb"><use href="#chev"/></svg><i class="thumb"></i><svg class="nav flip sb"><use href="#chev"/></svg>
        <svg class="size" viewBox="0 0 14 14"><path d="M1 13 13 1M6 13l7-7M10.500 13l3-3" stroke="#888" stroke-width="1.500"/></svg>
      </div>
    </section>

    <div class="right-tools">
      <div class="vbar"><i class="grip"></i>
        <b><svg><use href="#brush"/></svg></b><b><svg><use href="#mirror"/></svg></b><b><svg><use href="#diag"/></svg></b><b><svg><use href="#offset"/></svg></b><b><svg><use href="#array"/></svg></b><hr>
        <b><svg><use href="#move"/></svg></b><b><svg><use href="#rotate"/></svg></b><hr>
        <b><svg><use href="#scale"/></svg></b><b><svg><use href="#stretch"/></svg></b><hr>
        <b><svg><use href="#trim"/></svg></b><b><svg><use href="#extend"/></svg></b><b><svg><use href="#brk2"/></svg></b><b><svg><use href="#brk1"/></svg></b><b><svg><use href="#align"/></svg></b><hr>
        <b><svg><use href="#chamf"/></svg></b><b><svg><use href="#fillet"/></svg></b><hr>
        <b><svg><use href="#bomb"/></svg></b><b><svg><use href="#boomtbl"/></svg></b>
      </div>
      <div class="vbar second"><i class="grip"></i>
        <b><svg><use href="#ord1"/></svg></b><b><svg><use href="#ord2"/></svg></b><b><svg><use href="#ord3"/></svg></b><b><svg><use href="#ord4"/></svg></b>
      </div>
    </div>
  </main>

  <section class="command">
    <div class="cmd-side"><svg class="cls"><use href="#x"/></svg><svg class="pin"><use href="#pin"/></svg><span>Comm</span></div>
    <div class="cmd-body">
      <div class="cmd-log"><div class="lines"><p>Specify corner of window, or [All/Center/Dynamic/Extents/Previous/Scale/RScale/Window/Object/] &lt;real time&gt; e</p><p>*cancel*</p><p>*cancel*</p><p>BS,SAVE - Save document</p></div>
        <div class="cmd-scroll"><svg class="up"><use href="#chev"/></svg><svg class="down"><use href="#chev"/></svg></div></div>
      <div class="cmd-input">Command:</div>
    </div>
  </section>

  <footer class="status">
    <span class="coords">-23.5378,4.5814,0</span>
    <div class="modes"><span class="w46">SNAP</span><span class="w45">GRID</span><span class="w57 on">OSNAP</span><span class="w65 on">OTRACK</span><span class="w55">POLAR</span><span class="w61">ORTHO</span><span class="w34">SW</span><span class="w28 on">SH</span></div>
    <div class="view-tools"><b class="grey"><svg><use href="#pipes"/></svg></b><b class="grey"><svg><use href="#gridtri"/></svg></b><span>M1:1</span><b><svg><use href="#hand"/></svg></b><b><svg><use href="#zoom"/></svg></b><b><svg><use href="#zred"/></svg></b><b><svg><use href="#zpage"/></svg></b><b><svg><use href="#regen"/></svg></b><b><svg><use href="#full"/></svg></b></div>
  </footer>

  <div class="taskbar">
    <svg class="start"><use href="#win"/></svg>
    <div class="apps">
      <b><svg><use href="#store"/></svg></b><b><svg><use href="#spot"/></svg></b><b class="run multi"><svg><use href="#edge"/></svg></b><b class="run multi"><svg><use href="#folder"/></svg></b><b><svg><use href="#mend"/></svg></b><b class="run"><svg><use href="#fox"/></svg></b><b><svg><use href="#hex"/></svg></b>
      <b><svg viewBox="0 0 20 20"><path d="M.8.800h18.400v18.400H.8z" fill="#000" stroke="#f0f04a" stroke-width="1.600"/><text x="10" y="11.500" class="ic-pc">PC</text><path d="M4 16h7" stroke="#fff" stroke-width="1.400"/></svg></b>
      <b class="run"><svg><use href="#vsc"/></svg></b>
      <b><svg viewBox="0 0 20 20"><path d="M0 0h20v20H0z" fill="#dce9f6"/><path d="M4 3 0 6v14h5z" fill="#b9cfe6"/><text x="10.500" y="17" class="ic-revit">R</text></svg></b>
      <b><svg viewBox="0 0 20 20"><path d="M0 0h20v20H0z" fill="#151515"/><path d="m0 1 3 6 4 4-1-5 2-5 4 8 2 3 4-4-1 5-5 3 2 3-5-1-6-6z" fill="#fff"/><path d="m4 9 5 5M9 8l2 5" stroke="#222" stroke-width=".8"/><text x="16.500" y="8" class="ic-six">6</text></svg></b>
      <b><svg viewBox="0 0 20 20"><circle cx="10" cy="10" r="10" fill="#75aadb"/><text x="10" y="14.500" class="ic-rs">R</text></svg></b>
      <b><svg viewBox="0 0 20 20"><path d="M0 0h20v20H0z" fill="#f7e5dc"/><text x="10" y="17" class="ic-acad">A</text></svg></b>
      <b class="run active"><svg><use href="#logo"/></svg></b><b><svg><use href="#blend"/></svg></b><b><svg><use href="#brave"/></svg></b><b class="run"><svg><use href="#wapp"/></svg></b><b class="run"><svg><use href="#acro"/></svg></b><b class="run"><svg><use href="#pws"/></svg></b><b class="run"><svg><use href="#photo"/></svg></b>
    </div>
    <div class="tray">
      <b><svg><use href="#inf"/></svg></b><b><svg><use href="#drive"/></svg></b><b><svg><use href="#mag"/></svg></b><b><svg><use href="#chip"/></svg></b><b><svg><use href="#nv"/></svg></b><b><svg><use href="#bt"/></svg></b><b><svg><use href="#rot"/></svg></b><b><svg><use href="#cblue"/></svg></b><b class="hov"><svg><use href="#cgrey"/></svg></b><b><svg><use href="#batt"/></svg></b><b><svg><use href="#net"/></svg></b><b><svg><use href="#vol"/></svg></b>
      <span class="clock">13:09</span><svg class="note"><use href="#note"/></svg><i class="peek"></i>
    </div>
  </div>
</div>
</body>
</html>
```
FILE: styles.css
```css
* { box-sizing: border-box; }
body { margin: 0; background: #535353; font: 13.3px "Liberation Sans", sans-serif; color: #1c1c28; overflow: hidden; }
.sprite { position: absolute; width: 0; height: 0; }
svg { display: block; flex: none; }
b { font-weight: normal; }
hr { border: 0; margin: 0; flex: none; }
.window { width: 1920px; height: 1080px; display: flex; flex-direction: column; }
.window > * { flex: none; }

.ic-help { font: bold 14px "Liberation Sans", sans-serif; fill: #fff; text-anchor: middle; }
.ic-t { font: 20px "Liberation Serif", serif; fill: #444; }
.ic-bigt { font: 28px "Liberation Serif", serif; fill: #444; text-anchor: middle; }
.ic-one { font: bold 17px "Liberation Sans", sans-serif; fill: #245ca5; text-anchor: middle; }
.ic-pc { font: bold 10px "Liberation Sans", sans-serif; fill: #fff; text-anchor: middle; }
.ic-revit { font: bold 19px "Liberation Sans", sans-serif; fill: #2866a8; text-anchor: middle; }
.ic-six { font: 10px "Liberation Sans", sans-serif; fill: #ddd; text-anchor: middle; }
.ic-rs { font: 13px "Liberation Serif", serif; fill: #fff; text-anchor: middle; }
.ic-acad { font: bold 20px "Liberation Sans", sans-serif; fill: #b8242a; text-anchor: middle; }

.titlebar { height: 29px; background: #fff; display: flex; align-items: center; padding-left: 3px; font: 14px "Noto Sans", sans-serif; color: #000; }
.app-logo { width: 18px; height: 20px; margin-right: 6px; }
.app-name { flex: 1; }
.win-ctl { width: 14px; height: 14px; margin-right: 44px; }
.win-ctl:last-child { margin-right: 25px; }

.menubar { height: 33px; display: flex; align-items: center; gap: 19.500px; padding: 0 0 2px 6px; font: 13.4px "Noto Sans", sans-serif; color: #f2f2f2; }
.grip { flex: none; width: 2px; height: 18px; background: repeating-linear-gradient(#222 0 2px, transparent 2px 4.500px); }
.grip.light { background: repeating-linear-gradient(#ddd 0 2px, transparent 2px 4.500px); margin-right: -6px; }

.bar-row { height: 30px; display: flex; }
.hbar { display: flex; align-items: center; height: 30px; background: linear-gradient(#d1d4da, #b2b6be 50%, #949aa4); border-top: 1px solid #dfe1e5; border-bottom: 1px solid #6e747f; border-radius: 4px; padding: 2px 0 0 5px; }
.hbar .grip { margin-right: 4.300px; }
.hbar b { width: 26.300px; height: 25px; display: flex; justify-content: center; align-items: center; position: relative; flex: none; }
.hbar b svg { width: 20px; height: 20px; }
.hbar hr { width: 2px; height: 26px; margin: 0 4px; background: linear-gradient(90deg, #858b95 50%, #fff 50%); }
.more::after { content: ""; position: absolute; right: 0; bottom: 0; border-left: 5px solid transparent; border-bottom: 5px solid #2a86dc; }
.hbar b.on, .insp-tools b.on { background: linear-gradient(#ffe6b8, #ffc56b); box-shadow: inset 0 0 0 1px #cf9a4a; border-radius: 2px; }
.hbar b.on { width: 24px; margin: 0 1px; }
.bar-main { width: 662px; }
.bar-styles { width: 599px; }
.bar-dims { width: 333px; }
.bar-props { width: 1110px; }
.field { background: #fff; height: 26px; border: 1px solid #8d8d8d; border-top: 2px solid #858585; border-left: 2px solid #858585; display: flex; align-items: center; padding: 1px 0 0 2px; white-space: nowrap; flex: none; }
.f-text { width: 255px; box-shadow: 3px 0 #fff, 5px 0 #9ca1aa; margin-right: 7px; padding-left: 3px; font-size: 13px; }
.f-layer { width: 455px; margin: 0 7px 0 2px; padding-left: 3px; gap: 2px; box-shadow: 2px 0 #f0f0f0; }
.f-layer svg { width: 19px; height: 20px; }
.f-prop { width: 180.500px; margin-right: 7px; box-shadow: 2px 0 #f0f0f0; padding-left: 3px; font-size: 13px; }
.f-layer .swatch, .swatch { width: 14px; height: 14px; margin-right: 1px; }
.f-layer .swatch { margin-right: 0; }
.ltype { width: 70px; height: 1.500px; background: #222; margin: 0 2px; flex: none; }

.workspace { height: 798px; display: flex; }
.vbar { width: 28px; display: flex; flex-direction: column; align-items: center; background: linear-gradient(90deg, #d1d4da, #b2b6be 50%, #949aa4); border-left: 1px solid #dfe1e5; border-radius: 4px; padding-top: 6px; }
.vbar .grip { width: 20px; height: 3px; background: repeating-linear-gradient(90deg, #222 0 3px, transparent 3px 5.500px); margin-bottom: 3px; }
.vbar b { width: 28px; height: 26.300px; display: flex; align-items: center; justify-content: center; position: relative; flex: none; }
.vbar b svg { width: 20px; height: 20px; }
.vbar hr { width: 27px; height: 2px; margin: 4px 0; background: linear-gradient(#858b95 50%, #fff 50%); }
.left-tools { margin: 30px 2px 0 1px; height: 494px; }
.left-tools b { padding-right: 2px; }
.right-tools { margin: 30px 0 0 1px; }
.right-tools b { height: 26.200px; padding-right: 1px; }
.right-tools .vbar { height: 538px; }
.right-tools .vbar.second { height: 118px; padding-top: 4px; border-top: 1px solid #e4e5e8; }

.inspector { width: 284px; background: #fff; display: flex; flex-direction: column; margin-bottom: 1px; border: 1px solid #dadada; border-top: 2px solid #dfdfdf; }
.insp-head { height: 24px; background: #9a9c9a; display: flex; align-items: center; padding: 0 4px 2px 3px; font: 13.400px "Noto Sans", sans-serif; color: #454545; flex: none; }
.insp-head span { flex: 1; }
.pin { width: 10px; height: 12px; }
.cls { width: 12px; height: 12px; }
.insp-head .cls { margin-left: 10px; }
.insp-tools { height: 28px; background: linear-gradient(#c9ccd2, #959ba5); display: flex; align-items: center; padding: 0 0 1px 1px; flex: none; }
.insp-tools b { width: 25px; height: 24px; display: flex; align-items: center; justify-content: center; }
.insp-tools b.on { width: 23px; }
.insp-tools svg { width: 20px; height: 20px; }
.insp-tools hr { width: 2px; height: 15px; background: linear-gradient(90deg, #70757d 50%, #fff 50%); margin: 0 4px; }
.props { padding-top: .5px; }
.row { height: 27.500px; display: flex; border-bottom: 1px solid #777; background: #fff; line-height: 29px; white-space: nowrap; }
.row > span { height: 26.500px; }
.row > span:first-child { width: 126px; padding-left: 15px; border-right: 1px solid #777; letter-spacing: -.05px; }
.row > span:last-child { flex: 1; padding: 2px 0 0 3px; display: flex; align-items: center; }
.row.ro { background: #e2e2e2; }
.row.top { height: 28px; }
.row.top > span { height: 27px; }
.row.top > span:first-child { padding-left: 4px; }
.row > .pad:last-child { padding-left: 6px; }
.icons { gap: 1.500px; }
.icons svg { width: 20px; height: 20px; }
.icons .swatch { width: 14px; height: 14px; margin-right: 0; }
.group { height: 25px; border-top: 2px solid #f0f0f0; border-bottom: 1px solid #666; background: linear-gradient(#ced1d7, #969ca7 92%, #eee 93%); font: bold 13.200px/22px "Noto Sans", sans-serif; color: #111; padding: 0 5px 0 2px; display: flex; justify-content: space-between; align-items: center; letter-spacing: -.2px; }
.group i { width: 11px; height: 11px; border: 1px solid #999; border-radius: 2px; background: linear-gradient(#5a76b0, #5a76b0) center/6px 1px no-repeat, #eef0f3; }

.document { width: 1569px; margin: 0 0 1px 6px; background: #fff; border-left: 1px solid #ddd; display: flex; flex-direction: column; }
.tabstrip { height: 29px; background: linear-gradient(#8f969e, #cbced3 24px, #fff 25px, #fff 27px, #777 28px); display: flex; justify-content: space-between; align-items: flex-start; padding-top: 4px; }
.doc-tab { width: 250px; height: 23px; background: #fff; clip-path: polygon(27px 0, 100% 0, 100% 100%, 2px 100%); padding: 0 4px 2px 30px; display: flex; align-items: center; justify-content: space-between; font: bold 13.200px "Noto Sans", sans-serif; color: #111; white-space: nowrap; }
.doc-tab span { letter-spacing: .02px; }
.doc-tab svg { width: 12px; height: 12px; }
.drop { border: 6px solid transparent; border-top-color: #454545; border-bottom: 0; margin: 7px 8px 0 0; }
.canvas { width: 1557px; height: 737px; background: #000; margin-left: 5px; }
.cad-text { font: 50px "Liberation Sans", sans-serif; fill: #ff0; stroke: #ff0; stroke-width: 1.500px; }
.axis { font: 300 20px Lato, sans-serif; fill: #f4f4f4; }
.layoutbar { height: 26px; margin: 1px 5px 0; background: #f0f0f0; border-top: 1px solid #888; display: flex; align-items: center; padding: 0 0 2px 8px; }
.nav { width: 12px; height: 12px; margin-right: 11px; }
.flip { transform: scaleX(-1); }
.ltab { position: relative; width: 68px; height: 23px; margin-left: -5px; display: flex; justify-content: center; padding: 2px 3px 0 0; font-size: 12.800px; flex: none; }
.ltab svg { position: absolute; inset: 0; width: 100%; height: 100%; }
.ltab span { position: relative; }
.ltab.cur { width: 62px; margin-left: -8px; font-weight: bold; z-index: 1; padding-top: 3px; padding-right: 1px; }
.split { width: 22px; height: 18px; margin-left: auto; margin-right: 11px; }
.nav.sb { margin: 0 5px 0 0; }
.thumb { width: 735px; height: 19px; background: #cdcdcd; margin-right: 5px; }
.nav.flip.sb { margin-right: 15px; }
.size { width: 14px; height: 14px; align-self: flex-end; }

.command { height: 88px; margin: 5px 30px 0 31px; display: flex; }
.cmd-side { width: 23px; background: #9a9c9a; border-left: 1px solid #ddd; border-top: 1px solid #ccc; display: flex; flex-direction: column; align-items: center; padding: 6px 3px 0 0; overflow: hidden; }
.cmd-side .pin { transform: scaleY(-1); margin-top: 12px; }
.cmd-side span { writing-mode: vertical-rl; transform: rotate(180deg); font: 14px/16px "Noto Sans", sans-serif; margin-top: 5px; color: #444; }
.cmd-body { flex: 1; display: flex; flex-direction: column; font: 14.520px/17.400px "DejaVu Sans Mono", monospace; color: #303030; }
.cmd-log { height: 65px; background: #efefef; border: 1px solid #aaa; border-top: 2px solid #777; border-bottom: 3px double #999; display: flex; justify-content: space-between; overflow: hidden; }
.lines { margin-top: -6px; padding-left: 1px; height: 70px; }
.lines p { margin: 0; white-space: pre; }
.cmd-scroll { width: 22px; border-left: 1px solid #fafafa; display: flex; flex-direction: column; justify-content: space-between; padding: 5px 3px 3px; }
.cmd-scroll svg { width: 12px; height: 12px; }
.up { transform: rotate(90deg); }
.down { transform: rotate(-90deg); }
.cmd-input { flex: 1; background: #fff; padding: 4px 0 0 1px; color: #222; letter-spacing: -.15px; }

.status { height: 29px; background: linear-gradient(#333 0, #434754 1px, #3c404c 30%, #323232 38%, #343434); display: flex; align-items: center; font: 13.400px "Noto Sans", sans-serif; }
.coords { width: 268px; padding-left: 4px; color: #f0f0f0; letter-spacing: -.05px; }
.modes { display: flex; color: #222; }
.modes span { height: 25px; line-height: 23px; text-align: center; background: linear-gradient(#fff, #eef1f5 45%, #cdd6e0 55%, #f8f9fb); border: 1px solid #888; border-radius: 2px; padding-right: 2px; }
.modes .on { background: linear-gradient(#ffe0b0, #ffcf85 45%, #ffb03c 55%, #ffda90); border-color: #b98a4a; }
.w46 { width: 46px; } .w45 { width: 45px; } .w57 { width: 57px; } .w65 { width: 65.500px; } .w55 { width: 55.500px; } .w61 { width: 61px; } .w34 { width: 34px; } .w28 { width: 28px; }
.view-tools { margin-left: auto; width: 340px; height: 29px; background: linear-gradient(#c8ccd2, #70757e); border-left: 2px solid #888; display: flex; align-items: center; justify-content: flex-end; gap: 1.500px; padding-bottom: 1px; }
.view-tools b, .view-tools span { height: 25px; border: 1px solid #777; border-radius: 3px; background: linear-gradient(#fff, #eef1f5 45%, #cdd6e0 55%, #f8f9fb); display: flex; align-items: center; justify-content: center; }
.view-tools b { width: 26px; }
.view-tools b.grey { background: #c4c7cc; }
.view-tools span { width: 111px; color: #222; font-size: 13.800px; padding-right: 2px; }
.view-tools svg { width: 20px; height: 20px; }

.taskbar { height: 38px; background: #101010; display: flex; align-items: center; }
.start { width: 20px; height: 20px; margin-left: 12px; }
.apps { display: flex; margin-left: 357.500px; }
.apps b { width: 46.030px; height: 38px; display: flex; align-items: center; justify-content: center; position: relative; }
.apps svg, .tray svg { width: 20px; height: 20px; }
.run::after { content: ""; position: absolute; left: 5.500px; right: 5.500px; bottom: 0; height: 3px; background: #76b9ed; }
.multi::after { background: linear-gradient(90deg, #76b9ed 24px, #5c8fba 24px); }
.active { background: #333; }
.active::after { left: 0; right: 0; }
.tray { display: flex; align-items: center; margin-left: auto; width: 477px; }
.tray b { width: 30px; height: 38px; display: flex; align-items: center; justify-content: center; flex: none; }
.hov { background: #202020; }
.clock { font: 14px "Noto Sans", sans-serif; color: #fff; width: 60px; padding-left: 9px; letter-spacing: -.5px; }
.tray .note { margin-left: 6px; }
.peek { width: 1px; height: 38px; background: #555; margin-left: 25px; }
```
